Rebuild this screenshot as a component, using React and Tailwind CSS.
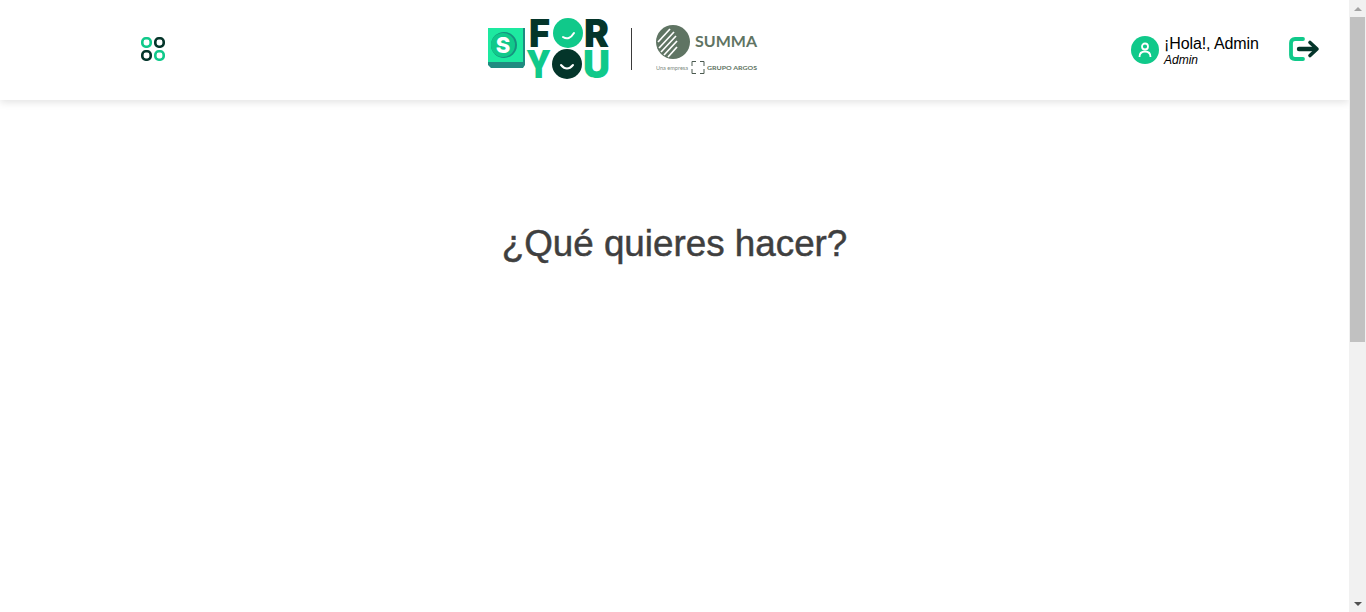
import React from "react";

const logoFont = "Inter, sans-serif";

function MenuIcon() {
    return (
        <svg width="26" height="26" viewBox="0 0 26 26" fill="none" strokeWidth="2.6">
            <rect x="2.3" y="2.3" width="8.4" height="8.4" rx="3.4" stroke="#10c98a" />
            <rect x="15.3" y="2.3" width="8.4" height="8.4" rx="3.4" stroke="#04352a" />
            <rect x="2.3" y="15.3" width="8.4" height="8.4" rx="3.4" stroke="#04352a" />
            <rect x="15.3" y="15.3" width="8.4" height="8.4" rx="3.4" stroke="#10c98a" />
        </svg>
    );
}

function ForYouLogo() {
    return (
        <svg width="124" height="64" viewBox="0 0 124 64" fill="none" className="overflow-visible">
            <path d="M0 44 L35 44 L35 10 L37 10 L37 47 L35 50 L3 50 L0 47 Z" fill="#1f8b80" />
            <rect x="0" y="10" width="35" height="34" fill="#1de9a0" />
            <circle cx="16" cy="27" r="13" fill="#16907f" />
            <circle cx="15" cy="27" r="12" fill="#10c98a" />
            <text x="15" y="35" textAnchor="middle" fontFamily={logoFont} fontWeight="800" fontSize="22" fill="#fff">S</text>
            <text x="41" y="29" fontFamily={logoFont} fontWeight="900" fontSize="38" fill="#04352a" textLength="21" lengthAdjust="spacingAndGlyphs">F</text>
            <circle cx="80" cy="15" r="15" fill="#10c98a" />
            <path d="M75 19 Q81 23 86 15" stroke="#fff" strokeWidth="2" strokeLinecap="round" />
            <text x="96" y="29" fontFamily={logoFont} fontWeight="900" fontSize="38" fill="#04352a" textLength="25" lengthAdjust="spacingAndGlyphs">R</text>
            <text x="41" y="60" fontFamily={logoFont} fontWeight="900" fontSize="38" fill="#10c98a" textLength="25" lengthAdjust="spacingAndGlyphs" transform="translate(-3 0)">Y</text>
            <circle cx="79" cy="46" r="15" fill="#04352a" />
            <path d="M73 47 Q79 54 85 47" stroke="#fff" strokeWidth="2" strokeLinecap="round" />
            <text x="95" y="60" fontFamily={logoFont} fontWeight="900" fontSize="38" fill="#10c98a" textLength="27" lengthAdjust="spacingAndGlyphs">U</text>
        </svg>
    );
}

function SummaLogo() {
    return (
        <svg width="104" height="50" viewBox="0 0 104 50" fill="none">
            <circle cx="17" cy="17" r="17" fill="#5f7463" />
            <g stroke="#fff" strokeWidth="1.7">
                <path d="M2 17 L14 4" />
                <path d="M3 23 L18 7" />
                <path d="M5 27 L20 11" />
                <path d="M8 30 L21 16" />
                <path d="M12 32 L21 22" />
            </g>
            <text x="39" y="22" fontFamily="Lato, sans-serif" fontWeight="700" fontSize="16" fill="#5f7463" textLength="62" lengthAdjust="spacingAndGlyphs">SUMMA</text>
            <text x="0" y="45" fontFamily="Lato, sans-serif" fontSize="5.5" fill="#7d8a80" textLength="32" lengthAdjust="spacingAndGlyphs">Una empresa</text>
            <path d="M36 41 V36.5 H40 M44 36.5 H48 V41 M48 44 V48.5 H44 M40 48.5 H36 V44" stroke="#4b5a50" strokeWidth="1" />
            <text x="51" y="45" fontFamily="Lato, sans-serif" fontWeight="700" fontSize="6" fill="#5f7463" textLength="50" lengthAdjust="spacingAndGlyphs">GRUPO ARGOS</text>
        </svg>
    );
}

function UserBadge() {
    return (
        <div className="w-7 h-7 rounded-full bg-[#10c98a] flex items-center justify-center">
            <svg width="16" height="18" viewBox="0 0 16 18" fill="none" stroke="#fff" strokeWidth="1.8">
                <circle cx="8" cy="5.5" r="3" />
                <path d="M2.5 16 C2.5 12 5 10.5 8 10.5 C11 10.5 13.5 12 13.5 16" />
            </svg>
        </div>
    );
}

function LogoutIcon() {
    return (
        <svg width="32" height="26" viewBox="0 0 32 26" fill="none" className="-mt-0.5">
            <path d="M14 3 H6 Q2 3 2 7 V19 Q2 23 6 23 H14" stroke="#10c98a" strokeWidth="3.8" strokeLinecap="round" />
            <path d="M10 13 H24" stroke="#04352a" strokeWidth="4.4" strokeLinecap="round" />
            <path d="M21 6.5 L28 13 L21 19.5" stroke="#04352a" strokeWidth="3.6" strokeLinecap="round" strokeLinejoin="round" />
        </svg>
    );
}

function Scrollbar() {
    return (
        <div className="w-[17px] h-full shrink-0 bg-[#f1f1f1] flex flex-col items-center">
            <div className="h-[17px] w-full flex items-center justify-center">
                <svg width="8" height="4" viewBox="0 0 8 4"><path d="M4 0 L8 4 L0 4 Z" fill="#a3a3a3" /></svg>
            </div>
            <div className="h-[325px] w-[15px] bg-[#c1c1c1]"></div>
            <div className="flex-1"></div>
            <div className="h-[17px] w-full flex items-center justify-center">
                <svg width="8" height="4" viewBox="0 0 8 4"><path d="M0 0 L8 0 L4 4 Z" fill="#505050" /></svg>
            </div>
        </div>
    );
}

function App() {
    return (
        <div className="w-full h-screen flex overflow-hidden bg-white font-['Liberation_Sans',sans-serif]">
            <div className="flex-1 min-w-0">
                <header className="h-[100px] bg-white shadow-[0_2px_8px_rgba(0,0,0,0.12)] flex items-center">
                    <div className="w-[488px] pl-[140px] flex items-center -mt-0.5">
                        <MenuIcon />
                    </div>
                    <div className="flex items-center">
                        <ForYouLogo />
                        <div className="w-px h-[42px] bg-[#3a3a3a] ml-[19px] mr-6 -mt-[3px]"></div>
                        <SummaLogo />
                    </div>
                    <div className="ml-auto flex items-center pr-[28px]">
                        <UserBadge />
                        <div className="ml-[5px] w-[125px] pt-0.5 text-black">
                            <p className="text-base leading-[18px] tracking-[-0.1px]">¡Hola!, Admin</p>
                            <p className="text-xs leading-[14px] italic">Admin</p>
                        </div>
                        <LogoutIcon />
                    </div>
                </header>
                <main className="pt-[119px] text-center">
                    <h1 className="text-[36.8px] leading-[50px] text-[#3f3f3f] [-webkit-text-stroke:0.5px_#3f3f3f]">¿Qué quieres hacer?</h1>
                </main>
            </div>
            <Scrollbar />
        </div>
    );
}

export default App;
